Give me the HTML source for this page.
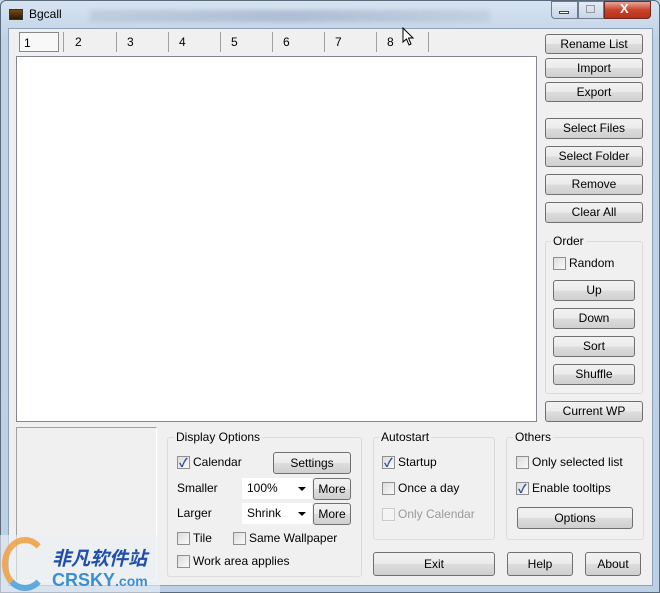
<!DOCTYPE html>
<html><head><meta charset="utf-8"><style>
*{margin:0;padding:0;box-sizing:border-box}
body{width:660px;height:593px;overflow:hidden;background:#c5d6e8;font-family:"Liberation Sans","Noto Sans CJK SC",sans-serif;font-size:12px;color:#000;position:relative}
.a{position:absolute}
.frame{left:0;top:0;width:660px;height:593px;border:1px solid #5a6a7c;border-radius:6px 6px 0 0;background:linear-gradient(#d6e3f1,#c0d2e6 40px,#bcd0e6)}
.client{left:8px;top:28px;width:645px;height:558px;background:#f0f0f0;border:1px solid #8da2b8}
.btn{position:absolute;border:1px solid #707070;border-radius:3px;background:linear-gradient(#f2f2f2,#ebebeb 50%,#dddddd 51%,#cfcfcf);text-align:center;font-size:12px;line-height:18px}
.grp{position:absolute;border:1px solid #dcdcdc;border-radius:3px}
.lbl{position:absolute;background:#f0f0f0;padding:0 2px;font-size:12px}
.cb{position:absolute;width:13px;height:13px;border:1px solid #8f8f8f;background:linear-gradient(135deg,#dcdcdc,#fafafa)}
.cb.k::after{content:"✓";position:absolute;left:1px;top:-3px;font-size:12px;color:#2a4f9c;font-weight:bold}
.t{position:absolute;white-space:nowrap}
.sep{position:absolute;top:32px;width:1px;height:20px;background:#a0a0a0}
.dd{position:absolute;background:#fff;height:21px;padding-left:5px;line-height:21px}
.dd::after{content:"";position:absolute;right:6px;top:9px;border:4px solid transparent;border-top:4px solid #000;border-bottom:0}
</style></head><body>
<div class="a frame"></div>
<div class="a" style="left:9px;top:9px;width:14px;height:11px;background:linear-gradient(#7a4a10,#2a1a05);border:1px solid #333"></div>
<div class="t" style="left:29px;top:7px;font-size:12px">Bgcall</div>
<div class="a" style="left:90px;top:10px;width:400px;height:12px;background:linear-gradient(90deg,rgba(150,160,180,.25),rgba(120,130,160,.35),rgba(150,160,180,.2));filter:blur(2px)"></div>
<div class="a" style="left:551px;top:1px;width:27px;height:18px;border:1px solid #6d7c8f;border-radius:0 0 0 4px;background:linear-gradient(#e4ecf6,#c7d6e8)"></div>
<div class="a" style="left:559px;top:11px;width:10px;height:3px;border:1px solid #444;background:#fff"></div>
<div class="a" style="left:578px;top:1px;width:26px;height:18px;border:1px solid #6d7c8f;background:linear-gradient(#e4ecf6,#c7d6e8)"></div>
<div class="a" style="left:586px;top:5px;width:9px;height:8px;border:1px solid #999"></div>
<div class="a" style="left:604px;top:1px;width:47px;height:18px;border:1px solid #6b2a20;border-radius:0 0 4px 0;background:linear-gradient(#e8a798,#c8432b 50%,#b8301a)"></div>
<div class="t" style="left:620px;top:1px;color:#fff;font-weight:bold;font-size:13px">X</div>
<div class="a client"></div>
<!-- tabs -->
<div class="a" style="left:19px;top:32px;width:40px;height:20px;border:1px solid #888;background:#f8f8f8"></div>
<div class="t" style="left:24px;top:36px">1</div>
<div class="t" style="left:75px;top:35px">2</div><div class="t" style="left:127px;top:35px">3</div>
<div class="t" style="left:179px;top:35px">4</div><div class="t" style="left:231px;top:35px">5</div>
<div class="t" style="left:283px;top:35px">6</div><div class="t" style="left:335px;top:35px">7</div>
<div class="t" style="left:387px;top:35px">8</div>
<div class="sep" style="left:63px"></div><div class="sep" style="left:116px"></div><div class="sep" style="left:168px"></div><div class="sep" style="left:220px"></div><div class="sep" style="left:272px"></div><div class="sep" style="left:324px"></div><div class="sep" style="left:376px"></div><div class="sep" style="left:428px"></div>
<svg class="a" style="left:402px;top:27px" width="14" height="20"><path d="M1 1 L1 15 L4.5 12 L7 18 L9 17 L6.5 11 L11 11 Z" fill="#fff" stroke="#000" stroke-width="1"/></svg>
<!-- list -->
<div class="a" style="left:16px;top:56px;width:521px;height:366px;background:#fff;border:1px solid #828790"></div>
<!-- right buttons -->
<div class="btn" style="left:545px;top:34px;width:98px;height:20px">Rename List</div>
<div class="btn" style="left:545px;top:58px;width:98px;height:20px">Import</div>
<div class="btn" style="left:545px;top:82px;width:98px;height:20px">Export</div>
<div class="btn" style="left:545px;top:118px;width:98px;height:21px">Select Files</div>
<div class="btn" style="left:545px;top:146px;width:98px;height:21px">Select Folder</div>
<div class="btn" style="left:545px;top:174px;width:98px;height:21px">Remove</div>
<div class="btn" style="left:545px;top:202px;width:98px;height:21px">Clear All</div>
<div class="grp" style="left:545px;top:241px;width:98px;height:153px"></div>
<div class="lbl" style="left:551px;top:234px">Order</div>
<div class="cb" style="left:553px;top:257px"></div><div class="t" style="left:569px;top:256px">Random</div>
<div class="btn" style="left:553px;top:280px;width:82px;height:21px">Up</div>
<div class="btn" style="left:553px;top:308px;width:82px;height:21px">Down</div>
<div class="btn" style="left:553px;top:336px;width:82px;height:21px">Sort</div>
<div class="btn" style="left:553px;top:364px;width:82px;height:21px">Shuffle</div>
<div class="btn" style="left:545px;top:401px;width:98px;height:21px">Current WP</div>
<!-- bottom left panel -->
<div class="a" style="left:16px;top:427px;width:141px;height:154px;border:1px solid #a0a0a0;border-right-color:#fff;border-bottom-color:#fff"></div>
<!-- display options -->
<div class="grp" style="left:167px;top:437px;width:195px;height:140px"></div>
<div class="lbl" style="left:174px;top:430px">Display Options</div>
<div class="cb k" style="left:177px;top:456px"></div><div class="t" style="left:193px;top:455px">Calendar</div>
<div class="btn" style="left:273px;top:452px;width:78px;height:22px;line-height:20px">Settings</div>
<div class="t" style="left:177px;top:481px">Smaller</div>
<div class="dd" style="left:242px;top:478px;width:70px">100%</div>
<div class="btn" style="left:313px;top:478px;width:38px;height:22px;line-height:20px">More</div>
<div class="t" style="left:177px;top:506px">Larger</div>
<div class="dd" style="left:242px;top:503px;width:70px">Shrink</div>
<div class="btn" style="left:313px;top:503px;width:38px;height:22px;line-height:20px">More</div>
<div class="cb" style="left:177px;top:532px"></div><div class="t" style="left:193px;top:531px">Tile</div>
<div class="cb" style="left:233px;top:532px"></div><div class="t" style="left:249px;top:531px">Same Wallpaper</div>
<div class="cb" style="left:177px;top:555px"></div><div class="t" style="left:193px;top:554px">Work area applies</div>
<!-- autostart -->
<div class="grp" style="left:373px;top:437px;width:122px;height:103px"></div>
<div class="lbl" style="left:379px;top:430px">Autostart</div>
<div class="cb k" style="left:382px;top:456px"></div><div class="t" style="left:398px;top:455px">Startup</div>
<div class="cb" style="left:382px;top:482px"></div><div class="t" style="left:398px;top:481px">Once a day</div>
<div class="cb" style="left:382px;top:508px;border-color:#ccc;background:#f4f4f4"></div><div class="t" style="left:398px;top:507px;color:#9a9a9a">Only Calendar</div>
<!-- others -->
<div class="grp" style="left:506px;top:437px;width:138px;height:103px"></div>
<div class="lbl" style="left:513px;top:430px">Others</div>
<div class="cb" style="left:516px;top:456px"></div><div class="t" style="left:532px;top:455px">Only selected list</div>
<div class="cb k" style="left:516px;top:482px"></div><div class="t" style="left:532px;top:481px">Enable tooltips</div>
<div class="btn" style="left:517px;top:507px;width:116px;height:22px;line-height:20px">Options</div>
<div class="btn" style="left:373px;top:552px;width:122px;height:24px;line-height:22px">Exit</div>
<div class="btn" style="left:507px;top:552px;width:66px;height:24px;line-height:22px">Help</div>
<div class="btn" style="left:585px;top:552px;width:56px;height:24px;line-height:22px">About</div>
<!-- watermark -->
<div class="a" style="left:0;top:535px;width:160px;height:58px;background:rgba(235,240,245,.6)"></div>
<div class="a" style="left:2px;top:537px;width:46px;height:54px;border-radius:50%;border:6px solid #f0a040;border-right-color:transparent;border-bottom-color:#4aa0d8;opacity:.85"></div>
<div class="t" style="left:52px;top:544px;font-size:19px;font-weight:bold;color:#1f4fa8;font-style:italic">非凡软件站</div>
<div class="t" style="left:52px;top:570px;font-size:18px;font-weight:bold;color:#3b8fd0">CRSKY<span style="font-size:14px">.com</span></div>
</body></html>
